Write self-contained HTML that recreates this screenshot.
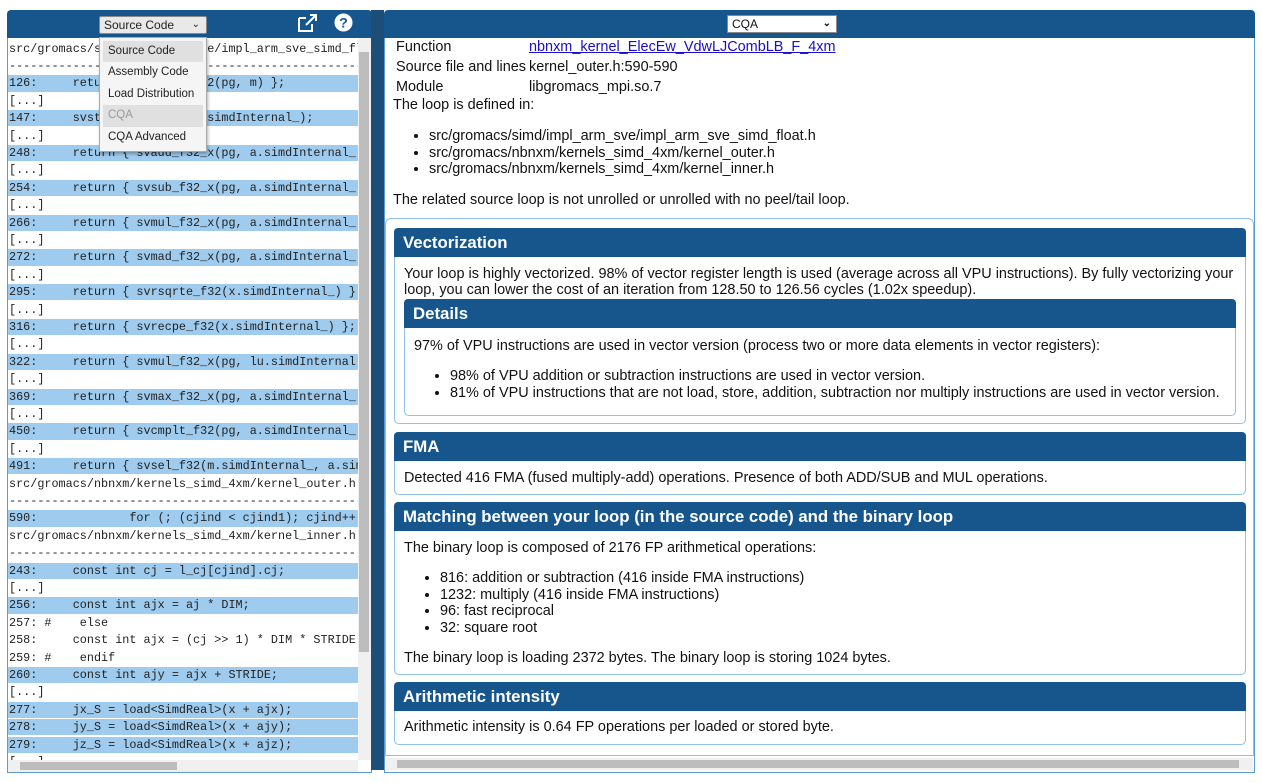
<!DOCTYPE html>
<html><head><meta charset="utf-8"><style>
*{margin:0;padding:0;box-sizing:border-box}
body{width:1262px;height:783px;background:#fff;position:relative;overflow:hidden;font-family:"Liberation Sans",sans-serif;font-size:14.45px;color:#111}
.abs{position:absolute}
.hdr{background:#17568c}
.code{font-family:"Liberation Mono",monospace;font-size:11.8px;white-space:pre;color:#222}
.row{position:absolute;left:8px;width:350px;height:16.4px;line-height:16.4px;overflow:hidden;padding-left:1px}
.hl{background:#9ecbee}
.box{position:absolute;border:1.5px solid #8fc0e6;border-radius:5px;background:#fff}
.sh{position:absolute;background:#17568c;color:#fff;font-weight:bold;font-size:16.8px;line-height:29px;padding-left:9px;border-radius:4px 4px 0 0}
.t{position:absolute;white-space:nowrap}
ul{list-style:disc}
</style></head><body>
<div class="abs hdr" style="left:7px;top:10px;width:365px;height:28px;border-radius:4px 4px 0 0"></div>
<div class="abs" style="left:7px;top:38px;width:365px;height:735px;border:1px solid #5b9bd0;border-top:none;background:#fff"></div>
<div class="abs" style="left:371px;top:10px;width:13px;height:760px;background:#1c4e78"></div>
<div class="code" id="code"></div>
<div class="abs" style="left:358px;top:38px;width:13px;height:722px;background:#f0f0f0"></div>
<div class="abs" style="left:359px;top:52px;width:10px;height:600px;background:#bdbdbd"></div>
<div class="abs" style="left:8px;top:760px;width:350px;height:12px;background:#f0f0f0"></div>
<div class="abs" style="left:20px;top:762px;width:157px;height:8px;background:#bdbdbd"></div>
<div class="abs" style="left:99px;top:16px;width:108px;height:18px;background:#e9e9e9;border:1px solid #888;border-radius:2px;font-size:12px;line-height:16px;padding-left:4px;color:#222">Source Code<span style="position:absolute;right:6px;font-size:10px">&#8964;</span></div>
<div class="abs" style="left:99px;top:37px;width:108px;height:115px;background:#f5f5f5;border:1px solid #aaa;box-shadow:1px 2px 3px rgba(0,0,0,.3);font-size:11.5px;color:#222">
<div style="margin:3px 3px 0;height:21px;line-height:21px;padding-left:5px;background:#e0e0e0">Source Code</div>
<div style="margin:0 3px;height:21.5px;line-height:21.5px;padding-left:5px">Assembly Code</div>
<div style="margin:0 3px;height:21.5px;line-height:21.5px;padding-left:5px">Load Distribution</div>
<div style="margin:0 3px;height:21.5px;line-height:21.5px;padding-left:5px;background:#e0e0e0;color:#999">CQA</div>
<div style="margin:0 3px;height:21.5px;line-height:21.5px;padding-left:5px">CQA Advanced</div>
</div>
<svg class="abs" style="left:297px;top:13px" width="22" height="20" viewBox="0 0 22 20"><path d="M2 5h7M2 5v13h13v-7" stroke="#fff" stroke-width="2" fill="none"/><path d="M9 12L19 2M13 2h6v6" stroke="#fff" stroke-width="2" fill="none"/></svg>
<svg class="abs" style="left:334px;top:13px" width="19" height="19" viewBox="0 0 20 20"><circle cx="10" cy="10" r="9.5" fill="#fff"/><text x="10" y="15.5" text-anchor="middle" font-family="Liberation Sans" font-weight="bold" font-size="15" fill="#17568c">?</text></svg>
<svg class="abs" style="left:1181px;top:13px" width="22" height="20" viewBox="0 0 22 20"><path d="M2 5h7M2 5v13h13v-7" stroke="#fff" stroke-width="2" fill="none"/><path d="M9 12L19 2M13 2h6v6" stroke="#fff" stroke-width="2" fill="none"/></svg>
<svg class="abs" style="left:1218px;top:13px" width="19" height="19" viewBox="0 0 20 20"><circle cx="10" cy="10" r="9.5" fill="#fff"/><text x="10" y="15.5" text-anchor="middle" font-family="Liberation Sans" font-weight="bold" font-size="15" fill="#17568c">?</text></svg>

<div class="abs hdr" style="left:384px;top:10px;width:871px;height:28px;border-radius:4px 4px 0 0"></div>
<div class="abs" style="left:384px;top:38px;width:871px;height:735px;border:1.5px solid #5b9bd0;border-top:none"></div>
<div class="abs" style="left:727px;top:15px;width:110px;height:18px;background:#fff;border:1px solid #888;font-size:12px;line-height:16px;padding-left:4px">CQA<span style="position:absolute;right:5px;font-size:10px;font-weight:bold">&#8964;</span></div>
<div class="t" style="left:396px;top:39px">Function</div>
<div class="t" style="left:529px;top:39px;color:#1a0dcc;text-decoration:underline">nbnxm_kernel_ElecEw_VdwLJCombLB_F_4xm</div>
<div class="t" style="left:396px;top:59px">Source file and lines</div>
<div class="t" style="left:529px;top:59px">kernel_outer.h:590-590</div>
<div class="t" style="left:396px;top:79px">Module</div>
<div class="t" style="left:529px;top:79px">libgromacs_mpi.so.7</div>
<div class="t" style="left:393px;top:97px">The loop is defined in:</div>
<ul class="t" style="left:429px;top:128px;line-height:16.5px"><li>src/gromacs/simd/impl_arm_sve/impl_arm_sve_simd_float.h</li><li>src/gromacs/nbnxm/kernels_simd_4xm/kernel_outer.h</li><li>src/gromacs/nbnxm/kernels_simd_4xm/kernel_inner.h</li></ul>
<div class="t" style="left:393px;top:192px">The related source loop is not unrolled or unrolled with no peel/tail loop.</div>

<div class="box" style="left:385px;top:218px;width:869px;height:538px;border-radius:6px 6px 0 0"></div>
<div class="box" style="left:394px;top:228px;width:852px;height:196px"></div>
<div class="sh" style="left:394px;top:228px;width:852px">Vectorization</div>
<div class="t" style="left:404px;top:266px;line-height:16px">Your loop is highly vectorized. 98% of vector register length is used (average across all VPU instructions). By fully vectorizing your<br>loop, you can lower the cost of an iteration from 128.50 to 126.56 cycles (1.02x speedup).</div>
<div class="box" style="left:404px;top:299px;width:832px;height:117px"></div>
<div class="sh" style="left:404px;top:299px;width:832px">Details</div>
<div class="t" style="left:414px;top:338px">97% of VPU instructions are used in vector version (process two or more data elements in vector registers):</div>
<ul class="t" style="left:450px;top:368px;line-height:16.5px"><li>98% of VPU addition or subtraction instructions are used in vector version.</li><li>81% of VPU instructions that are not load, store, addition, subtraction nor multiply instructions are used in vector version.</li></ul>

<div class="box" style="left:394px;top:432px;width:852px;height:63px"></div>
<div class="sh" style="left:394px;top:432px;width:852px">FMA</div>
<div class="t" style="left:404px;top:470px">Detected 416 FMA (fused multiply-add) operations. Presence of both ADD/SUB and MUL operations.</div>

<div class="box" style="left:394px;top:502px;width:852px;height:173px"></div>
<div class="sh" style="left:394px;top:502px;width:852px">Matching between your loop (in the source code) and the binary loop</div>
<div class="t" style="left:404px;top:540px">The binary loop is composed of 2176 FP arithmetical operations:</div>
<ul class="t" style="left:440px;top:570px;line-height:16.5px"><li>816: addition or subtraction (416 inside FMA instructions)</li><li>1232: multiply (416 inside FMA instructions)</li><li>96: fast reciprocal</li><li>32: square root</li></ul>
<div class="t" style="left:404px;top:650px">The binary loop is loading 2372 bytes. The binary loop is storing 1024 bytes.</div>

<div class="box" style="left:394px;top:682px;width:852px;height:63px"></div>
<div class="sh" style="left:394px;top:682px;width:852px">Arithmetic intensity</div>
<div class="t" style="left:404px;top:719px">Arithmetic intensity is 0.64 FP operations per loaded or stored byte.</div>
<div class="abs" style="left:386px;top:758px;width:867px;height:12px;background:#f0f0f0"></div>
<div class="abs" style="left:397px;top:760px;width:842px;height:8px;background:#bdbdbd"></div>

<script>
var rows=[["src/gromacs/simd/impl_arm_sve/impl_arm_sve_simd_float.h",0],["-------------------------------------------------------",0],
["126:     return { svcmpne_b32(pg, m) };",1],["[...]",0],["147:     svst1_f32(pg, m, a.simdInternal_);",1],["[...]",0],
["248:     return { svadd_f32_x(pg, a.simdInternal_",1],["[...]",0],["254:     return { svsub_f32_x(pg, a.simdInternal_",1],["[...]",0],
["266:     return { svmul_f32_x(pg, a.simdInternal_",1],["[...]",0],["272:     return { svmad_f32_x(pg, a.simdInternal_",1],["[...]",0],
["295:     return { svrsqrte_f32(x.simdInternal_) };",1],["[...]",0],["316:     return { svrecpe_f32(x.simdInternal_) };",1],["[...]",0],
["322:     return { svmul_f32_x(pg, lu.simdInternal",1],["[...]",0],["369:     return { svmax_f32_x(pg, a.simdInternal_",1],["[...]",0],
["450:     return { svcmplt_f32(pg, a.simdInternal_",1],["[...]",0],["491:     return { svsel_f32(m.simdInternal_, a.simd",1],
["src/gromacs/nbnxm/kernels_simd_4xm/kernel_outer.h",0],["-------------------------------------------------------",0],
["590:             for (; (cjind < cjind1); cjind++",1],["src/gromacs/nbnxm/kernels_simd_4xm/kernel_inner.h",0],["-------------------------------------------------------",0],
["243:     const int cj = l_cj[cjind].cj;",1],["[...]",0],["256:     const int ajx = aj * DIM;",1],["257: #    else",0],
["258:     const int ajx = (cj >> 1) * DIM * STRIDE",0],["259: #    endif",0],["260:     const int ajy = ajx + STRIDE;",1],["[...]",0],
["277:     jx_S = load<SimdReal>(x + ajx);",1],["278:     jy_S = load<SimdReal>(x + ajy);",1],["279:     jz_S = load<SimdReal>(x + ajz);",1],["[...]",0]];
var h="";rows.forEach(function(r,i){var top=40.5+i*17.4;var txt=r[0].replace(/&/g,"&amp;").replace(/</g,"&lt;").replace(/>/g,"&gt;");
var ht=i==41?"6":"16.4";h+='<div class="row'+(r[1]?' hl':'')+'" style="top:'+top+'px;height:'+ht+'px">'+txt+'</div>';});
document.getElementById("code").innerHTML=h;
</script>
</body></html>
